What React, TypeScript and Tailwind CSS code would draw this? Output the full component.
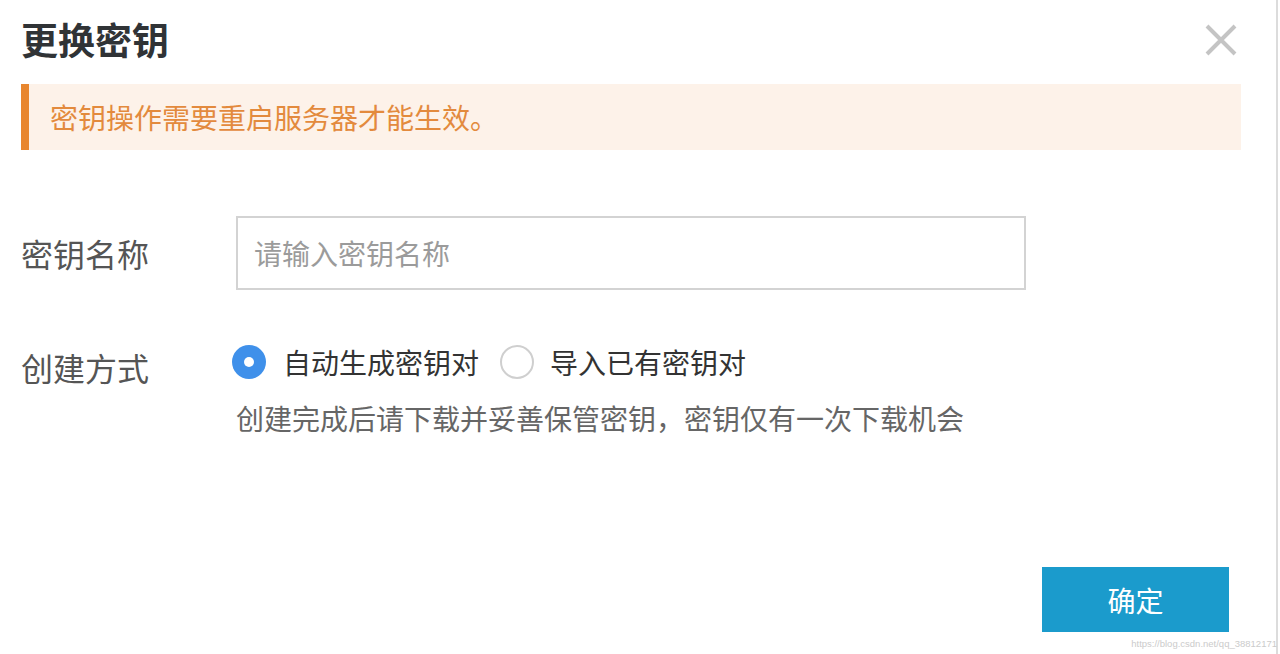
import React, { useState } from 'react';

export default function App() {
  const [mode, setMode] = useState<'auto' | 'import'>('auto');

  return (
    <div className="relative w-[1280px] h-[654px] bg-white overflow-hidden font-['Noto_Sans_CJK_SC','Noto_Sans',sans-serif]">
      <div className="w-[1278px] h-full border-r-2 border-[#dcdcdc] pl-[21px] pr-[35px]">
        {/* header */}
        <header className="flex justify-between items-center pt-[21px]">
          <h1 className="text-[37px] leading-[37px] font-bold text-[#303336]">更换密钥</h1>
          <button className="mr-[4px]">
            <svg width="32" height="32" viewBox="0 0 32 32">
              <path d="M2 2 L30 30 M30 2 L2 30" stroke="#c4c4c4" strokeWidth="4" fill="none" />
            </svg>
          </button>
        </header>

        {/* notice */}
        <div className="mt-[26px] h-[66px] flex items-center bg-[#fdf2e9] border-l-[8px] border-[#e8862e] pl-[21px]">
          <span className="text-[28px] leading-none text-[#e38a3d]">密钥操作需要重启服务器才能生效。</span>
        </div>

        {/* key name */}
        <div className="flex items-center mt-[66px]">
          <label className="w-[215px] text-[32px] leading-none text-[#555]">密钥名称</label>
          <input
            placeholder="请输入密钥名称"
            className="w-[790px] h-[74px] border-2 border-[#d3d3d3] pl-[16px] text-[28px] text-[#333] placeholder:text-[#9b9b9b] outline-none"
          />
        </div>

        {/* create mode */}
        <div className="flex items-start mt-[55px]">
          <label className="w-[215px] mt-[6px] text-[32px] leading-none text-[#555]">创建方式</label>
          <div>
            <div className="flex items-center h-[34px] -ml-[4px]">
              <button onClick={() => setMode('auto')} className="flex items-center">
                {mode === 'auto' ? (
                  <span className="w-[34px] h-[34px] rounded-full bg-[#3f90ea] flex items-center justify-center">
                    <span className="w-[10px] h-[10px] rounded-full bg-white" />
                  </span>
                ) : (
                  <span className="w-[34px] h-[34px] rounded-full border-2 border-[#cfcfcf]" />
                )}
                <span className="ml-[17px] text-[28px] leading-none text-[#333]">自动生成密钥对</span>
              </button>
              <button onClick={() => setMode('import')} className="flex items-center ml-[21px]">
                {mode === 'import' ? (
                  <span className="w-[34px] h-[34px] rounded-full bg-[#3f90ea] flex items-center justify-center">
                    <span className="w-[10px] h-[10px] rounded-full bg-white" />
                  </span>
                ) : (
                  <span className="w-[34px] h-[34px] rounded-full border-2 border-[#cfcfcf]" />
                )}
                <span className="ml-[16px] text-[28px] leading-none text-[#333]">导入已有密钥对</span>
              </button>
            </div>
            <p className="mt-[25px] text-[28px] leading-none text-[#666]">创建完成后请下载并妥善保管密钥，密钥仅有一次下载机会</p>
          </div>
        </div>

        {/* footer */}
        <div className="flex justify-end mt-[135px]">
          <button className="w-[187px] h-[65px] mr-[12px] bg-[#1b9bcc] text-white text-[28px] leading-none">确定</button>
        </div>
      </div>

      <span className="absolute right-[3px] bottom-[6px] text-[9.5px] leading-none text-[#cbcbcb] font-['Liberation_Sans',sans-serif]">
        https://blog.csdn.net/qq_38812171
      </span>
    </div>
  );
}
